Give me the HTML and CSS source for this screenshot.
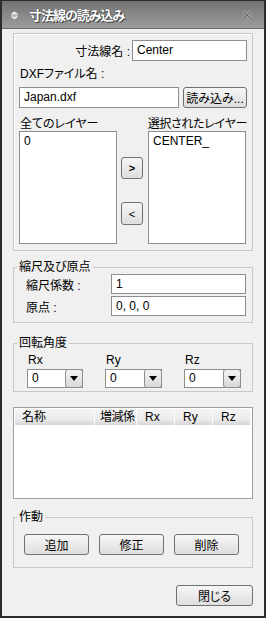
FILE: index.html
```html
<!DOCTYPE html>
<html lang="ja">
<head>
    <meta charset="UTF-8">
    <meta name="viewport" content="width=device-width, initial-scale=1.0">
    <title>寸法線の読み込み</title>
    <link rel="stylesheet" href="styles.css">
</head>
<body>
    <div class="window">
        <!-- Title bar -->
        <div class="titlebar">
            <svg class="title-icon" width="9" height="11" viewBox="0 0 9 11">
                <circle cx="4.5" cy="5.5" r="4.2" fill="#b4b4b4" stroke="#808080" stroke-width="0.6"/>
                <path d="M2.3 4.6 L4.5 2.4 L6.7 4.6" fill="none" stroke="#f4f4f4" stroke-width="1.1"/>
                <path d="M2.3 6.4 L4.5 8.6 L6.7 6.4" fill="none" stroke="#f4f4f4" stroke-width="1.1"/>
            </svg>
            <span class="title-text">寸法線の読み込み</span>
            <svg class="title-close" width="10" height="10" viewBox="0 0 10 10">
                <path d="M1 1 L9 9 M9 1 L1 9" stroke="#b8b8b8" stroke-width="2.6"/>
                <path d="M1 1 L9 9 M9 1 L1 9" stroke="#6a6a6a" stroke-width="1.3"/>
            </svg>
        </div>

        <div class="dialog-body">
            <!-- Layer panel -->
            <div class="panel">
                <div class="name-row">
                    <span class="name-label">寸法線名 :</span>
                    <div class="input name-input">Center</div>
                </div>
                <div class="caption">DXFファイル名 :</div>
                <div class="file-row">
                    <div class="input file-input">Japan.dxf</div>
                    <button class="btn load-btn">読み込み...</button>
                </div>
                <div class="layer-heads">
                    <span class="head-left">全てのレイヤー</span>
                    <span class="head-right">選択されたレイヤー</span>
                </div>
                <div class="layer-lists">
                    <div class="list">0</div>
                    <div class="move-btns">
                        <button class="btn move-btn">&gt;</button>
                        <button class="btn move-btn move-back">&lt;</button>
                    </div>
                    <div class="list">CENTER_</div>
                </div>
            </div>

            <!-- Scale and origin -->
            <fieldset class="group scale-group">
                <legend>縮尺及び原点</legend>
                <div class="form-rows">
                    <div class="form-row">
                        <span class="form-label">縮尺係数 :</span>
                        <div class="input form-input">1</div>
                    </div>
                    <div class="form-row">
                        <span class="form-label">原点 :</span>
                        <div class="input form-input">0, 0, 0</div>
                    </div>
                </div>
            </fieldset>

            <!-- Rotation -->
            <fieldset class="group rot-group">
                <legend>回転角度</legend>
                <div class="rot-grid">
                    <div class="rot-col">
                        <span class="rot-label">Rx</span>
                        <div class="combo"><span class="combo-val">0</span><span class="combo-btn"><i class="arrow"></i></span></div>
                    </div>
                    <div class="rot-col">
                        <span class="rot-label">Ry</span>
                        <div class="combo"><span class="combo-val">0</span><span class="combo-btn"><i class="arrow"></i></span></div>
                    </div>
                    <div class="rot-col">
                        <span class="rot-label">Rz</span>
                        <div class="combo"><span class="combo-val">0</span><span class="combo-btn"><i class="arrow"></i></span></div>
                    </div>
                </div>
            </fieldset>

            <!-- List view -->
            <div class="listview">
                <div class="lv-header">
                    <span class="lv-col col-name">名称</span>
                    <span class="lv-col col-scale">増減係</span>
                    <span class="lv-col col-r">Rx</span>
                    <span class="lv-col col-r">Ry</span>
                    <span class="lv-col col-r">Rz</span>
                </div>
            </div>

            <!-- Actions -->
            <fieldset class="group action-group">
                <legend>作動</legend>
                <div class="action-btns">
                    <button class="btn action-btn">追加</button>
                    <button class="btn action-btn">修正</button>
                    <button class="btn action-btn">削除</button>
                </div>
            </fieldset>

            <div class="footer">
                <button class="btn close-btn">閉じる</button>
            </div>
        </div>
    </div>
</body>
</html>
```

FILE: styles.css
```css
* {
    margin: 0;
    padding: 0;
    box-sizing: border-box;
}

body {
    font-family: "Liberation Sans", "Noto Sans CJK JP", sans-serif;
    font-size: 12px;
    font-feature-settings: "palt";
    color: #000;
    background: #2c2c2c;
}

.window {
    width: 266px;
    height: 618px;
    border-top: 1px solid #2c2c2c;
    border-left: 2px solid #2c2c2c;
    border-right: 2px solid #2c2c2c;
    border-bottom: 2px solid #2c2c2c;
    background: #f0f0f0;
    display: flex;
    flex-direction: column;
}

/* Title bar */
.titlebar {
    height: 28px;
    background: linear-gradient(#727272, #9d9d9d);
    border-bottom: 1px solid #6b6b6b;
    display: flex;
    align-items: center;
    padding: 0 0 0 8px;
}

.title-icon {
    margin-top: 1px;
}

.title-text {
    margin-left: 10px;
    font-size: 13px;
    font-weight: bold;
    letter-spacing: -1px;
    color: #fff;
    text-shadow: 0 0 1px #333, 1px 1px 0 #444;
}

.title-close {
    margin-left: auto;
    margin-right: 12px;
}

/* Body */
.dialog-body {
    flex: 1;
    padding: 4px 11px 0 11px;
}

.input {
    background: #fff;
    border: 1px solid #8f8f8f;
    height: 21px;
    line-height: 19px;
    padding-left: 4px;
    white-space: nowrap;
}

.btn {
    font-family: inherit;
    font-size: 12px;
    font-feature-settings: "palt";
    color: #000;
    background: linear-gradient(#f6f6f6, #dedede);
    border: 1px solid #707070;
    border-radius: 3px;
    height: 21px;
    cursor: pointer;
    white-space: nowrap;
}

/* Layer panel */
.panel {
    border: 1px solid #c6c6c6;
    box-shadow: inset 1px 1px 0 #fff;
    padding: 6px 5px;
}

.name-row {
    display: flex;
    justify-content: flex-end;
    align-items: center;
}

.name-label {
    margin-right: 2px;
}

.name-input {
    width: 115px;
}

.caption {
    line-height: 14px;
    margin: 6px 0 6px 1px;
}

.file-row {
    display: flex;
    gap: 4px;
}

.file-input {
    width: 160px;
}

.load-btn {
    width: 64px;
    padding: 0;
}

.layer-heads {
    display: flex;
    padding-top: 9px;
    height: 23px;
    line-height: 14px;
    white-space: nowrap;
}

.head-left {
    width: 129px;
    padding-left: 1px;
}

.head-right {
    letter-spacing: -0.3px;
}

.layer-lists {
    display: flex;
}

.list {
    width: 98px;
    height: 113px;
    background: #fff;
    border: 1px solid #8f8f8f;
    padding: 2px 0 0 4px;
    line-height: 14px;
}

.move-btns {
    width: 31px;
    display: flex;
    flex-direction: column;
    padding: 26px 0 0 4px;
}

.move-btn {
    width: 22px;
    height: 22px;
    font-size: 11px;
    font-weight: bold;
}

.move-back {
    margin-top: 23px;
    height: 23px;
    font-weight: normal;
}

/* Group boxes */
.group {
    border: 1px solid #c9c9c9;
    padding: 0;
}

.group legend {
    margin-left: 3px;
    padding: 0 2px;
    line-height: 14px;
}

.scale-group {
    margin-top: 9px;
}

.form-rows {
    padding: 0 6px 6px 12px;
    display: flex;
    flex-direction: column;
    gap: 2px;
}

.form-row {
    display: flex;
    align-items: center;
}

.form-label {
    width: 85px;
}

.form-input {
    width: 135px;
    height: 20px;
    line-height: 18px;
}

.rot-group {
    margin-top: 13px;
}

.rot-grid {
    display: grid;
    grid-template-columns: 56px 57px 57px;
    column-gap: 22px;
    padding: 3px 0 3px 13px;
}

.rot-col {
    display: flex;
    flex-direction: column;
}

.rot-label {
    line-height: 14px;
    margin-bottom: 2px;
    padding-left: 1px;
}

.combo {
    height: 19px;
    background: #fff;
    border: 1px solid #8f8f8f;
    display: flex;
    align-items: stretch;
}

.combo-val {
    flex: 1;
    padding-left: 4px;
    line-height: 17px;
}

.combo-btn {
    width: 18px;
    border: 1px solid #8f8f8f;
    border-radius: 3px;
    background: linear-gradient(#f3f3f3, #d9d9d9);
    display: flex;
    align-items: center;
    justify-content: center;
    margin: -1px -1px -1px 0;
}

.arrow {
    width: 0;
    height: 0;
    border-left: 4px solid transparent;
    border-right: 4px solid transparent;
    border-top: 5px solid #000;
}

/* List view */
.listview {
    margin-top: 15px;
    height: 92px;
    border: 1px solid #a0a0a0;
    background: #fff;
    padding: 1px;
}

.lv-header {
    display: flex;
    height: 16px;
}

.lv-col {
    background: linear-gradient(#f4f4f4 0%, #ececec 60%, #d6d6d6 100%);
    border-right: 1px solid #fafafa;
    padding-left: 6px;
    line-height: 16px;
    white-space: nowrap;
    overflow: hidden;
}

.col-name {
    width: 80px;
    padding-left: 7px;
}

.col-scale {
    width: 42px;
    padding-left: 5px;
    letter-spacing: -0.5px;
}

.col-r {
    width: 38px;
    padding-left: 8px;
}

/* Actions */
.action-group {
    margin-top: 11px;
}

.action-btns {
    display: flex;
    gap: 10px;
    padding: 10px 0 12px 10px;
}

.action-btn {
    width: 65px;
}

.footer {
    display: flex;
    justify-content: flex-end;
    margin-top: 17px;
}

.close-btn {
    width: 77px;
}
```
